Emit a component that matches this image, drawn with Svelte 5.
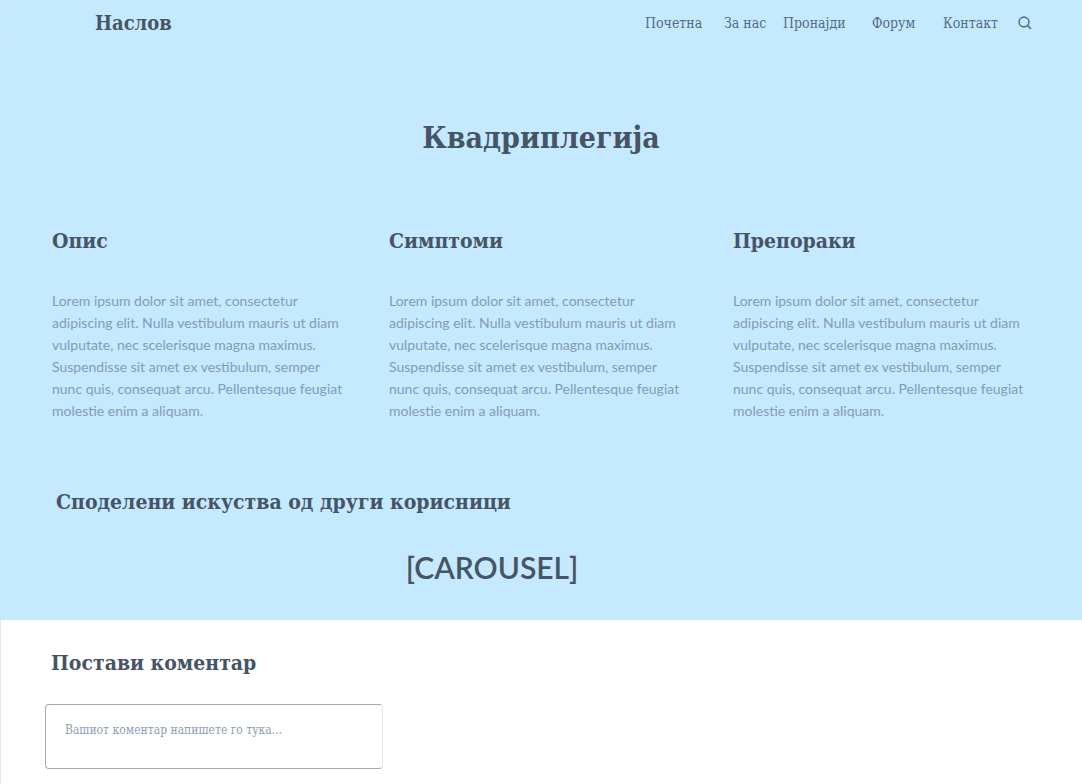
<script>
  const links = ['Почетна', 'За нас', 'Пронајди', 'Форум', 'Контакт'];
  const text =
    'Lorem ipsum dolor sit amet, consectetur adipiscing elit. Nulla vestibulum mauris ut diam vulputate, nec scelerisque magna maximus. Suspendisse sit amet ex vestibulum, semper nunc quis, consequat arcu. Pellentesque feugiat molestie enim a aliquam.';
  const sections = ['Опис', 'Симптоми', 'Препораки'];
  let comment = $state('');
</script>

<div class="page">
  <header>
    <a class="brand" href="#top">Наслов</a>
    <nav>
      {#each links as link}
        <a href="#top">{link}</a>
      {/each}
      <button type="button" aria-label="Пребарај">
        <svg viewBox="0 0 14 14" width="14" height="14" fill="none" stroke="currentColor">
          <circle cx="6" cy="6" r="4.9" stroke-width="1.6" />
          <path d="M9.2 9.2 L12.9 12.9" stroke-width="1.9" />
        </svg>
      </button>
    </nav>
  </header>

  <main>
    <h1>Квадриплегија</h1>
    <div class="columns">
      {#each sections as title}
        <section>
          <h2>{title}</h2>
          <p>{text}</p>
        </section>
      {/each}
    </div>
    <section class="stories">
      <h2>Споделени искуства од други корисници</h2>
      <div class="carousel">[CAROUSEL]</div>
    </section>
  </main>

  <form class="comment">
    <h2><label for="comment">Постави коментар</label></h2>
    <textarea id="comment" placeholder="Вашиот коментар напишете го тука..." bind:value={comment}></textarea>
  </form>
</div>

<style>
  :global(body) {
    margin: 0;
    background: #fff;
  }
  .page {
    font-family: 'Roboto Slab', 'DejaVu Serif Condensed', 'DejaVu Serif', serif;
    color: #465565;
  }
  header {
    box-sizing: border-box;
    height: 46px;
    padding: 0 50px 0 94px;
    display: flex;
    align-items: center;
    justify-content: space-between;
    background: #c5e9ff;
    border: 1px solid #cfeaf9;
    border-right: 0;
  }
  a {
    color: inherit;
    text-decoration: none;
  }
  .brand {
    font-size: 20px;
    font-weight: 700;
  }
  nav {
    display: grid;
    grid-template-columns: 79px 59px 89px 71px 75px 14px;
    align-items: center;
    font-size: 14px;
    line-height: 20px;
    color: #566b7f;
    white-space: nowrap;
  }
  button {
    display: flex;
    padding: 0;
    border: 0;
    background: none;
    color: #5c7488;
    cursor: pointer;
  }
  main {
    background: #c5e9ff;
    padding: 72px 52px 33px;
  }
  h1 {
    margin: 0;
    font-size: 30px;
    line-height: 40px;
    text-align: center;
  }
  h2 {
    margin: 0;
    font-size: 21px;
    line-height: 28px;
  }
  .columns {
    display: grid;
    grid-template-columns: 337fr 344fr 297fr;
    padding-top: 69px;
  }
  .columns p {
    margin: 35px 0 0;
    max-width: 296px;
    font-family: Lato, sans-serif;
    font-size: 14px;
    line-height: 22px;
    color: #849bb8;
  }
  .stories {
    padding: 66px 4px 0;
  }
  .carousel {
    margin-top: 31px;
    padding-right: 98px;
    font-family: Lato, sans-serif;
    font-size: 30px;
    font-weight: 600;
    line-height: 40px;
    text-align: center;
  }
  .comment {
    padding: 29px 44px 15px;
    border-left: 1px solid #e6e6e6;
  }
  .comment h2 {
    padding-left: 6px;
  }
  textarea {
    box-sizing: border-box;
    display: block;
    width: 338px;
    max-width: 100%;
    height: 65px;
    margin-top: 27px;
    padding: 15px 19px;
    border: 1px solid #a3a9b8;
    border-right-color: #e4e6ee;
    border-radius: 4px;
    resize: none;
    font-family: inherit;
    font-size: 12px;
    line-height: 20px;
    color: #465565;
    background: #fff;
  }
  textarea::placeholder {
    color: #8d9db5;
    opacity: 1;
  }
</style>
